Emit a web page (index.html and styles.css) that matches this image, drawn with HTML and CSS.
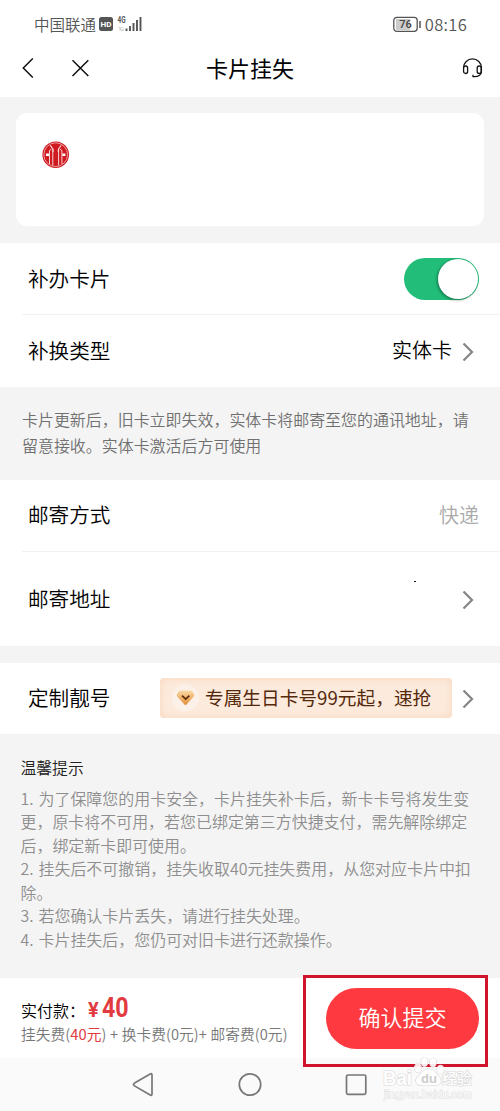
FILE: index.html
```html
<!DOCTYPE html>
<html lang="zh-CN">
<head>
<meta charset="utf-8">
<title>卡片挂失</title>
<link rel="stylesheet" href="styles.css">
</head>
<body>
<div class="screen">
  <div class="status">
    <span class="carrier">中国联通</span>
    <svg class="signal" width="46" height="18" viewBox="0 0 46 18">
      <rect x="0" y="2" width="14" height="14" rx="2.500" fill="#555"/>
      <text x="7" y="12.400" class="hd" textLength="11" lengthAdjust="spacingAndGlyphs">HD</text>
      <text x="18.500" y="8" class="g4" textLength="8" lengthAdjust="spacingAndGlyphs">4G</text>
      <text x="19" y="15.500" class="g1" textLength="6">1G</text>
      <path d="M27.500 16v-2.500M31 16v-5M34.500 16v-8M38 16V5M41.500 16V2" stroke="#555" stroke-width="1.900"/>
    </svg>
    <svg class="battery" width="29" height="17" viewBox="0 0 29 17">
      <rect x="3" y="3" width="14" height="11" fill="#ccc"/>
      <rect x=".8" y="1.300" width="23.400" height="14" rx="3" fill="none" stroke="#555" stroke-width="1.300"/>
      <path d="M27 5v7" stroke="#555" stroke-width="1.500"/>
      <text x="12.500" y="12.300" class="pct">76</text>
    </svg>
    <span class="time">08:16</span>
  </div>
  <div class="header">
    <svg width="80" height="24" viewBox="0 0 80 24" class="line-icon">
      <path d="M22.800 2.500L13.300 12L22.800 21.500M62.500 4.300L78.300 20M78.300 4.300L62.500 20"/>
    </svg>
    <h1>卡片挂失</h1>
    <svg width="22" height="24" viewBox="0 0 22 24" class="line-icon headset">
      <path d="M2.600 11.500A8.900 8.600 0 0 1 20.400 11.500V15.500C20.400 19 17.500 21 12 20.500V18.800"/>
      <rect x="2.600" y="10" width="4" height="7.500" rx="2"/>
      <rect x="16.200" y="10" width="4" height="7.500" rx="2"/>
    </svg>
  </div>
  <div class="card-area">
    <div class="card">
      <svg width="28" height="28" viewBox="0 0 28 28">
        <circle cx="13.700" cy="13.700" r="13.300" fill="#cf1a20"/>
        <circle cx="13.700" cy="13.700" r="11.900" fill="none" stroke="#fff" stroke-width=".7" opacity=".8"/>
        <path d="M7.500 23V9.500L9.500 8M10.800 24.500V8L8.500 5.200M16.600 24.500V8L18.900 5.200M19.900 23V9.500L17.900 8" fill="none" stroke="#fff" stroke-width=".9" opacity=".9"/>
        <path d="M8.300 4h10.800l-2.500 4.200h-5.800z" fill="#cf1a20"/>
        <path d="M8.300 4l2.800 4v3M19.100 4l-2.800 4v3" fill="none" stroke="#fff" stroke-width=".8"/>
        <path d="M4 12.500h3v2.400H4zM20.400 12.500h3v2.400h-3z" fill="#fff"/>
      </svg>
    </div>
  </div>
  <div class="row lined">
    <span class="label">补办卡片</span>
    <span class="switch"><span class="knob"></span></span>
  </div>
  <div class="row">
    <span class="label">补换类型</span>
    <span class="value">实体卡</span>
    <svg class="chevron" width="12" height="20" viewBox="0 0 12 20"><path d="M1.500 1.500L10 10L1.500 18.500"/></svg>
  </div>
  <div class="notice">卡片更新后，旧卡立即失效，实体卡将邮寄至您的通讯地址，请<br>留意接收。实体卡激活后方可使用</div>
  <div class="row lined">
    <span class="label">邮寄方式</span>
    <span class="value muted">快递</span>
  </div>
  <div class="row address">
    <span class="label">邮寄地址</span>
    <span class="dot"></span>
    <svg class="chevron" width="12" height="20" viewBox="0 0 12 20"><path d="M1.500 1.500L10 10L1.500 18.500"/></svg>
  </div>
  <div class="row custom">
    <span class="label">定制靓号</span>
    <div class="promo">
      <svg width="28" height="28" viewBox="0 0 28 28">
        <defs><linearGradient id="gem" x2="0" y2="1"><stop stop-color="#fad9a6"/><stop offset="1" stop-color="#e58e38"/></linearGradient></defs>
        <circle cx="14.500" cy="14" r="13.500" fill="#fbf1e8"/>
        <path d="M9 6.500h11q1 0 1.500 1l1.600 3q.5 1-.3 1.900L15.500 20.500q-1 1-2 0l-7.300-8.100q-.8-.9-.3-1.900l1.600-3q.5-1 1.500-1z" fill="url(#gem)"/>
        <path d="M11 11.700L14.700 15.200L18.400 11.700" fill="none" stroke="#5a2c0b" stroke-width="1.700"/>
      </svg>
      <span>专属生日卡号99元起，速抢</span>
    </div>
    <svg class="chevron" width="12" height="20" viewBox="0 0 12 20"><path d="M1.500 1.500L10 10L1.500 18.500"/></svg>
  </div>
  <div class="tips">
    <h2>温馨提示</h2>
    <p>1. 为了保障您的用卡安全，卡片挂失补卡后，新卡卡号将发生变<br>更，原卡将不可用，若您已绑定第三方快捷支付，需先解除绑定<br>后，绑定新卡即可使用。</p>
    <p>2. 挂失后不可撤销，挂失收取40元挂失费用，从您对应卡片中扣<br>除。</p>
    <p>3. 若您确认卡片丢失，请进行挂失处理。</p>
    <p>4. 卡片挂失后，您仍可对旧卡进行还款操作。</p>
  </div>
  <div class="pay">
    <div class="sum">
      <div class="total"><span>实付款：</span><b class="yen">¥</b><b class="amount">40</b></div>
      <div class="detail">挂失费(<em>40元</em>) + 换卡费(0元)+ 邮寄费(0元)</div>
    </div>
    <div class="submit">确认提交</div>
  </div>
  <div class="nav">
    <svg width="500" height="53" viewBox="0 0 500 53">
      <path d="M134.500 25.100L150.200 16q1.800-1 1.800 1V36q0 2-1.800 1L134.500 27.900q-2-1.400 0-2.800z"/>
      <circle cx="250" cy="26.500" r="10.700"/>
      <rect x="346.500" y="17" width="19.300" height="19.300" rx="1.500"/>
    </svg>
  </div>
  <div class="focus-frame"></div>
  <svg class="watermark" width="96" height="48" viewBox="0 0 96 48">
    <g class="mark">
      <ellipse cx="36" cy="14" rx="3.500" ry="4.500"/>
      <ellipse cx="42.500" cy="8" rx="3.200" ry="4.500"/>
      <ellipse cx="51" cy="8.500" rx="3.200" ry="4.500"/>
      <ellipse cx="58.500" cy="15.500" rx="3.400" ry="4.200"/>
      <path d="M47 15C52 15 53 19 57 22.500C61 27 58 32 53 31H40C34 32 32 26 36 22.500C40 19 42 15 47 15z"/>
      <text x="1" y="31" class="bai" textLength="29" lengthAdjust="spacingAndGlyphs">Bai</text>
      <text x="60" y="29.500" class="jy" textLength="30" lengthAdjust="spacingAndGlyphs">经验</text>
      <text x="2" y="44" class="url" textLength="88" lengthAdjust="spacingAndGlyphs">jingyan.baidu.com</text>
    </g>
    <text x="39" y="29" class="du">du</text>
  </svg>
</div>
</body>
</html>
```
FILE: styles.css
```css
* { box-sizing: border-box; }
body { margin: 0; background: #fff; font-family: "Noto Sans CJK SC", sans-serif; font-weight: 350; color: #000; }
svg { display: block; flex: none; }
.screen { position: relative; width: 500px; height: 1111px; overflow: hidden; background: #f4f4f4; white-space: nowrap; }
.status { display: flex; align-items: center; height: 48px; padding: 0 33px 0 34px; background: #fff; color: #555; }
.carrier { margin-top: -1px; font-size: 15.500px; line-height: 20px; }
.signal { margin-left: 3px; margin-right: auto; }
.hd { font: 700 8px Roboto, sans-serif; fill: #fff; text-anchor: middle; }
.g4 { font: 700 8.500px Roboto, sans-serif; fill: #555; }
.g1 { font: 400 6px Roboto, sans-serif; fill: #bbb; }
.pct { font: 500 11px Roboto, sans-serif; fill: #444; text-anchor: middle; }
.time { margin-top: -1px; margin-left: 3px; font-size: 16.500px; letter-spacing: .3px; line-height: 20px; }
.header { display: flex; align-items: center; justify-content: space-between; height: 49px; padding: 0 17px 9px 10px; background: #fff; }
.header h1 { margin: -2px 0 0 58px; flex: 1; padding-left: 58px; font-size: 22px; line-height: 30px; font-weight: 400; }
.line-icon { fill: none; stroke: #111; stroke-width: 1.500; }
.headset { stroke-width: 1.300; }
.card-area { height: 146px; padding: 16px; }
.card { height: 113px; padding: 28px 26px; border-radius: 11px; background: #fff; }
.row { display: flex; align-items: center; height: 72px; padding: 0 21px 0 28px; background: #fff; }
.lined { background: linear-gradient(#f1f1f1, #f1f1f1) 22px 100% / 478px 1px no-repeat #fff; }
.label { margin: -3px auto 0 0; font-size: 20.600px; line-height: 30px; }
.value { margin-top: -2px; font-size: 20px; line-height: 30px; }
.muted { color: #aaa; }
.chevron { margin: 2px 5px 0 10px; fill: none; stroke: #858585; stroke-width: 2.200; }
.switch { display: flex; justify-content: flex-end; width: 75px; height: 42px; margin-top: -1px; padding: 1px; border-radius: 21px; background: #22bd79; }
.knob { width: 40px; height: 40px; border-radius: 50%; background: #fff; box-shadow: -1px 1px 3px rgba(0,0,0,.4); }
.notice { height: 92.500px; padding: 18.500px 22px; font-size: 15.960px; line-height: 26px; color: #707070; }
.address { height: 94.500px; }
.address .label { margin-top: -1px; }
.dot { width: 2px; height: 1px; margin: -34px 36px 0 0; background: #111; }
.custom { height: 71px; margin-top: 16.500px; }
.promo { display: flex; align-items: center; width: 292px; height: 40px; padding: 0 11px; border-radius: 4px; background: #fcebdd; box-shadow: inset 0 0 10px #f9d6bd; color: #55290c; font-size: 18.700px; font-weight: 400; }
.promo span { margin: -3px 0 0 6px; }
.tips { height: 244.500px; padding: 22px 20.500px 0; font-size: 15.960px; line-height: 23.600px; color: #8e8e8e; }
.tips h2 { margin: 0 0 7px; font-size: 15.800px; line-height: 24px; font-weight: 350; color: #222; }
.tips p { margin: 0; word-spacing: 1.400px; }
.pay { display: flex; align-items: center; justify-content: space-between; height: 80px; padding: 0 21px; background: #fff; }
.total { display: flex; align-items: baseline; height: 31px; line-height: 32px; font-size: 16px; }
.yen, .amount { font-family: Roboto, sans-serif; font-weight: 700; color: #e23b3f; }
.yen { margin-left: 3px; font-size: 20px; }
.amount { margin-left: 3px; font-size: 27px; transform: scaleX(.86); transform-origin: 0 50%; }
.detail { font-size: 14.700px; line-height: 22px; letter-spacing: .08px; word-spacing: .2px; color: #777; }
.detail em { font-style: normal; font-weight: 400; color: #e23b3f; }
.submit { width: 153px; height: 61px; border-radius: 31px; background: #fe3a40; color: #fff; font-size: 22px; line-height: 57px; text-align: center; }
.nav { height: 53px; background: #fafafa; }
.nav svg { fill: none; stroke: #777; stroke-width: 1.700; }
.focus-frame { position: absolute; left: 303px; top: 975px; width: 185px; height: 92px; border: 3px solid #cf142b; }
.watermark { position: absolute; left: 382px; top: 1054px; }
.mark { fill: #fff; stroke: #d6d6d6; stroke-width: 1.200; paint-order: stroke; opacity: .9; }
.bai { font: 700 21px "Liberation Sans", sans-serif; }
.jy { font: 500 15px "Noto Sans CJK SC", sans-serif; }
.url { font: 400 10px "Liberation Sans", sans-serif; stroke-width: .8; }
.du { font: 700 13px "Liberation Sans", sans-serif; fill: #ccc; }
```
